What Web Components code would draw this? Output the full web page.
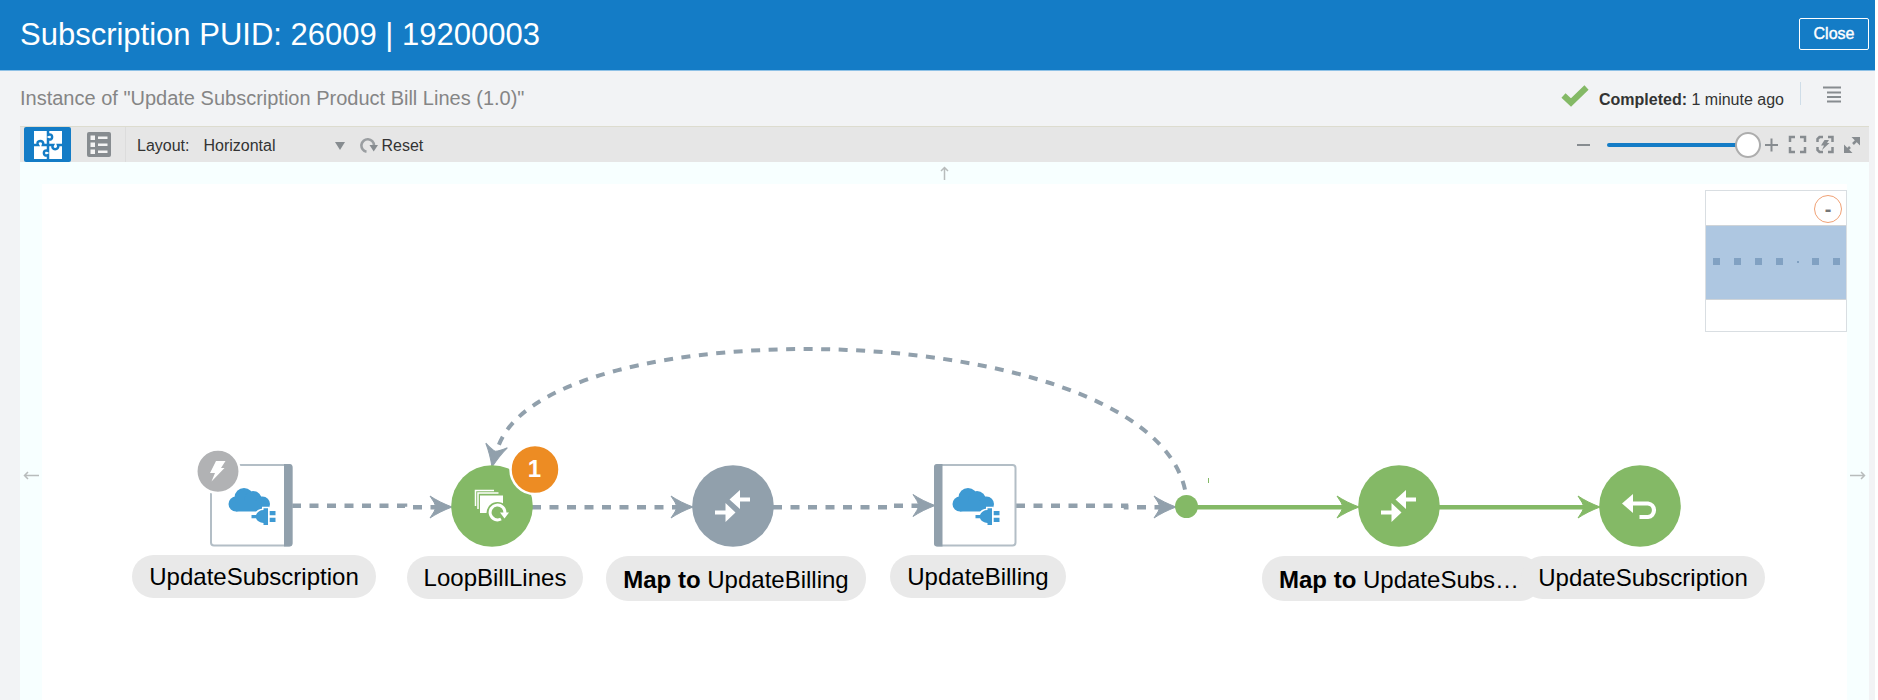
<!DOCTYPE html>
<html lang="en">
<head>
<meta charset="utf-8">
<title>Subscription instance</title>
<style>
html,body{margin:0;background:#fff;font-family:"Liberation Sans",Arial,sans-serif;font-size:16px;color:#333}
</style>
</head>
<body>
<instance-page>
  <page-header slot="header">Subscription PUID: 26009 | 19200003</page-header>
  <instance-bar slot="bar"><span>Instance of "Update Subscription Product Bill Lines (1.0)"</span><b slot="state">Completed:</b><span slot="when">1 minute ago</span></instance-bar>
  <canvas-toolbar slot="tools"></canvas-toolbar>
  <flow-canvas>
    <flow-edges></flow-edges>
    <flow-node kind="trigger" style="left:84px;top:302px">UpdateSubscription</flow-node>
    <flow-node kind="loop" style="left:325px;top:303px" badge="1">LoopBillLines</flow-node>
    <flow-node kind="map-idle" style="left:566px;top:303px"><b>Map to</b> UpdateBilling</flow-node>
    <flow-node kind="invoke" style="left:808px;top:302px">UpdateBilling</flow-node>
    <flow-node kind="map" clipped style="left:1232px;top:303px"><b>Map to</b> UpdateSubs…</flow-node>
    <flow-node kind="return" style="left:1473px;top:303px">UpdateSubscription</flow-node>
    <mini-map slot="overview"></mini-map>
  </flow-canvas>
</instance-page>

<script>
const define = (name, html, setup) => customElements.define(name, class extends HTMLElement {
  connectedCallback() {
    if (this.shadowRoot) return;
    const t = document.createElement('template');
    t.innerHTML = html;
    this.attachShadow({mode: 'open'}).appendChild(t.content.cloneNode(true));
    if (setup) setup(this, this.shadowRoot);
  }
});

define('instance-page', `
<style>
:host{display:flex;flex-direction:column;min-height:100vh;margin-right:3px;background:#f2f3f5}
main{flex:1;display:flex;flex-direction:column;padding:0 6px 0 20px}
</style>
<slot name="header"></slot>
<slot name="bar"></slot>
<main><slot name="tools"></slot><slot></slot></main>`);

define('page-header', `
<style>
:host{display:flex;align-items:center;justify-content:space-between;height:70px;padding:0 6px 0 20px;background:#147cc6;border-bottom:1px solid #8fc1e6;color:#fff}
h1{margin:0;font-size:31px;line-height:36px;font-weight:400}
button{height:32px;width:70px;margin:0 0 3px;padding:0;background:none;border:1px solid #fff;border-radius:2px;color:#fff;font:16px "Liberation Sans",Arial,sans-serif;-webkit-text-stroke:.4px #fff}
</style>
<h1><slot></slot></h1><button type="button">Close</button>`);

define('instance-bar', `
<style>
:host{display:flex;align-items:center;justify-content:space-between;height:55px;padding:0 32px 0 20px}
h2{margin:0 0 2px;font-size:20px;line-height:24px;font-weight:400;color:#858585}
.s{display:flex;align-items:center}
.t{margin:3px 16px 0 10px;line-height:20px;white-space:pre}
i{width:1px;height:23px;margin:0 22px 10px 0;background:#cfdde8}
button{display:flex;padding:0;margin-bottom:8px;border:0;background:none}
.ok{margin-bottom:5px}
</style>
<h2><slot></slot></h2>
<div class="s">
<svg class="ok" width="28" height="22"><path d="M2.500 10.500 L10 17.500 L25.500 2.500" fill="none" stroke="#84b966" stroke-width="6"/></svg>
<div class="t"><slot name="state"></slot> <slot name="when"></slot></div><i></i>
<button type="button" aria-label="Menu"><svg width="20" height="17"><path d="M0 1.500H18M4 6.500H18M4 11H18M4 15.500H18" stroke="#878c90" stroke-width="2"/></svg></button>
</div>`);

define('canvas-toolbar', `
<style>
:host{display:flex;align-items:center;height:35px;border-top:1px solid #dddccf;background:#e6e6e6}
button{display:flex;align-items:center;justify-content:center;padding:0;border:0;background:none;color:inherit;font:inherit}
.view{width:47px;height:35px;margin-left:4px;border-radius:2px}
.on{background:#147cc6}
.sep{width:1px;height:35px;margin:0 11px 0 3px;background:#dcdcdc}
label,.pick,.reset{margin-top:2px}
.pick{display:grid;align-items:center;width:143px;margin-left:14px;margin-right:14px}
.pick>*{grid-area:1/1}
select{appearance:none;width:100%;padding:0;border:0;background:none;color:inherit;font:inherit;line-height:20px}
.pick svg{justify-self:end;margin-right:1px;pointer-events:none}
.reset{gap:3px}
.zoom{display:flex;align-items:center;margin-left:auto;padding-right:8px}
input{appearance:none;width:154px;height:28px;margin:0 4px 0 16px;background:none}
input::-webkit-slider-runnable-track{height:4px;border-radius:2px;background:#147cc6}
input::-webkit-slider-thumb{appearance:none;width:26px;height:26px;margin-top:-11px;border:2px solid #adadad;border-radius:50%;background:#fff}
.z{margin-left:9px}
</style>
<button class="view on" type="button" aria-label="Canvas view"><svg width="28" height="28" viewBox="0 0 28 28"><path d="M0 0H28V28H0Z" fill="#fff"/><path d="M14 0V4C19.500 1 19.500 11 14 8V14M0 14H4C1 8.500 11 8.500 9 14H19C16 19.500 26 19.500 24 14H28M14 14V20C8.500 17 8.500 27 14 24V28" fill="none" stroke="#147cc6" stroke-width="2.500"/></svg></button>
<button class="view" type="button" aria-label="List view"><svg width="24" height="25"><rect width="24" height="25" rx="2" fill="#878c90"/><path d="M3.500 3.500h4.500v4.500h-4.500zM3.500 10.500h4.500v4.500h-4.500zM3.500 17.500h4.500v4.500h-4.500zM11 4.500h9.500v2.500h-9.500zM11 11.500h9.500v2.500h-9.500zM11 18.500h9.500v2.500h-9.500z" fill="#f4f4f4"/></svg></button>
<span class="sep"></span>
<label for="lay">Layout:</label>
<span class="pick"><select id="lay"><option>Horizontal</option><option>Vertical</option></select><svg width="10" height="8"><path d="M0 0H10L5 8Z" fill="#878c90"/></svg></span>
<button class="reset" type="button"><svg width="18" height="17" viewBox="0 0 18 17"><path d="M6.500 14.700A6.300 6.300 0 1 1 14 8.500" fill="none" stroke="#9a9ea1" stroke-width="2.600"/><path d="M9.500 8H18L13.700 14.500Z" fill="#878c90"/></svg>Reset</button>
<div class="zoom">
<button type="button" aria-label="Zoom out"><svg width="14" height="14"><path d="M0 7H13" stroke="#878c90" stroke-width="2"/></svg></button>
<input type="range" min="0" max="100" value="100" aria-label="Zoom">
<button type="button" aria-label="Zoom in"><svg width="14" height="14"><path d="M0 7H13M6.500 0.500V13.500" stroke="#878c90" stroke-width="2"/></svg></button>
<button class="z" type="button" aria-label="Fit"><svg width="19" height="19"><path d="M2 7V2H7M12 2H17V7M17 12V17H12M7 17H2V12" fill="none" stroke="#878c90" stroke-width="2.500"/></svg></button>
<button class="z" type="button" aria-label="Fit activity"><svg width="18" height="19"><path d="M1.500 7V4L3.500 2H7M12 2H16.500V7M16.500 12V17H12M7 17H3.500L1.500 15V12" fill="none" stroke="#878c90" stroke-width="2.500"/><path d="M8.500 5H13L11 8H13.500L6 15L8 10.500H5Z" fill="#878c90"/></svg></button>
<button class="z" type="button" aria-label="Full screen"><svg width="18" height="18"><path d="M10 8L14 4M3 15L7 11" stroke="#878c90" stroke-width="2.500"/><path d="M8.500 1H17V9.500ZM1 8.500V17H9.500Z" fill="#878c90"/></svg></button>
</div>`);

define('flow-canvas', `
<style>
:host{display:grid;grid-template:22px 1fr / 22px 1fr 22px;flex:1;position:relative;overflow:hidden;background:#f7ffff}
.top{grid-area:1/1/2/4;place-self:center}
.side{place-self:center;margin-top:66px}
.left{grid-area:2/1}
.right{grid-area:2/3}
.area{grid-area:2/2;background:#fff}
.map{position:absolute;top:28px;right:22px}
</style>
<div class="area"></div>
<svg class="top" width="9" height="14"><path d="M4.500 14V2M1 5L4.500 1.500L8 5" fill="none" stroke="#b8bcbc" stroke-width="1.500"/></svg>
<svg class="side left" width="16" height="9"><path d="M16 4.500H2M5 1L1.500 4.500L5 8" fill="none" stroke="#b8bcbc" stroke-width="1.500"/></svg>
<svg class="side right" width="16" height="9"><path d="M0 4.500H14M11 1L14.500 4.500L11 8" fill="none" stroke="#b8bcbc" stroke-width="1.500"/></svg>
<slot></slot>
<div class="map"><slot name="overview"></slot></div>`);

define('flow-edges', `
<style>:host{position:absolute;left:0;top:0}svg{display:block}</style>
<svg width="1848" height="440" viewBox="20 162 1848 440">
<defs>
<path id="h" d="M0 0C-8-3-16-7-22-11Q-17-4-16 0Q-17 4-22 11C-16 7-8 3 0 0Z"/>
</defs>
<g fill="none" stroke="#91a0ac" stroke-width="4.500" stroke-dasharray="9 8.500">
<path d="M292 505.700H405V507.200H438"/>
<path d="M532 507.200H680"/>
<path d="M773 507.200H888V505.700H922"/>
<path d="M1016 505.700H1126V507.200H1162"/>
<path d="M1187 507C1185 312 525 301 496 455" stroke-width="4"/>
</g>
<g fill="#91a0ac" stroke="#91a0ac">
<use href="#h" x="452" y="507"/><use href="#h" x="693" y="507"/><use href="#h" x="935" y="505.500"/><use href="#h" x="1176" y="507"/>
<use href="#h" transform="translate(492 467) rotate(102)"/>
</g>
<path d="M1187 507.200H1345M1439 507.200H1586" stroke="#84b966" stroke-width="4.500"/>
<g fill="#84b966">
<use href="#h" x="1359" y="507" stroke="#84b966"/><use href="#h" x="1600" y="507" stroke="#84b966"/>
<circle cx="1186.500" cy="506.500" r="11.500"/>
<path d="M1208 478h1v5h-1z"/>
</g>
</svg>`);

const cloud = `<g fill="#3e9ad3"><circle cx="26" cy="40" r="7.500"/><circle cx="34" cy="33.500" r="9.500"/><circle cx="43" cy="36" r="9"/><circle cx="52.500" cy="40" r="7.500"/><path d="M26 37H53V47.500H26Z"/></g>
<g stroke="#fff" stroke-width="3" fill="#fff"><path d="M41.500 51H46C47 48 50 46 53.500 46V44.300H58V61H53.500V59C50 59 47 57 46 54.300H41.500Z"/></g>
<path fill="#3e9ad3" d="M41.500 51H46C47 48 50 46 53.500 46V44.300H58V61H53.500V59C50 59 47 57 46 54.300H41.500ZM59.700 47H65.500V51.300H59.700ZM59.700 53.700H65.500V58H59.700Z"/>`;
const box = bar => `<rect x="1" y="1" width="80.500" height="80.500" rx="3" fill="#fff" stroke="#b3bec6" stroke-width="2"/>${bar}${cloud}`;
const disc = c => `<circle cx="41" cy="41" r="40.800" fill="${c}"/>`;
const mapIcon = `<path fill="#fff" d="M37.500 34.500L48 25V32.500H58V36.500H48V44ZM43.500 47.500L33.500 38V45.500H23V49.500H33.500V57Z"/>`;
const shapes = {
  trigger: box('<path d="M74 0H79.500A3 3 0 0 1 82.500 3V79.500A3 3 0 0 1 79.500 82.500H74Z" fill="#91a0ac"/>') +
    '<circle cx="8" cy="7.300" r="21.700" fill="#b1b2b4" stroke="#fff" stroke-width="2.500"/><path fill="#fff" d="M6-3H15.500L11 4H14.500L1.500 17.500L5 9H0Z"/>',
  invoke: box('<path d="M3 0H8.500V82.500H3A3 3 0 0 1 0 79.500V3A3 3 0 0 1 3 0Z" fill="#91a0ac"/>'),
  loop: disc('#84b966') +
    '<path d="M24.500 41V25.500H43M27 44V28H47.500" fill="none" stroke="#fff" stroke-width="1.500"/><path d="M29 30.500H52V48H29Z" fill="#fff"/><circle cx="46.500" cy="48" r="11" fill="#84b966"/><path d="M50 54A7.400 7.400 0 1 1 53.900 48" fill="none" stroke="#fff" stroke-width="3"/><path d="M49 47.500H58L53.500 53.500Z" fill="#fff"/><circle cx="84" cy="4.500" r="24.500" fill="#ed8c23" stroke="#fff" stroke-width="2.500"/>',
  'map-idle': disc('#91a0ac') + mapIcon,
  map: disc('#84b966') + mapIcon,
  return: disc('#84b966') + '<path d="M23 38.500L34 29V48Z" fill="#fff"/><path d="M33 38.500H49A6.800 6.800 0 0 1 49 52H40.500" fill="none" stroke="#fff" stroke-width="4.200"/>'
};

define('flow-node', `
<style>
:host{position:absolute;display:flex;flex-direction:column;align-items:center;width:300px;color:#000}
.shape{position:relative;width:82px;height:82px;margin:0 7px 9px 0}
svg{display:block;overflow:visible}
.badge{position:absolute;left:61px;top:-19px;width:46px;line-height:46px;text-align:center;font-size:24px;font-weight:700;color:#fff}
.label{box-sizing:border-box;padding:0 17px;border-radius:22px;background:#e9e9e9;font-size:24px;line-height:43px;white-space:nowrap}
:host([kind^="map"]) .label{padding-top:2px}
:host([clipped]) .label{width:280px}
</style>
<div class="shape"><svg width="82" height="82"></svg></div>
<div class="label"><slot></slot></div>`, (el, root) => {
  root.querySelector('svg').innerHTML = shapes[el.getAttribute('kind')];
  if (el.hasAttribute('badge')) {
    const b = document.createElement('span');
    b.className = 'badge';
    b.textContent = el.getAttribute('badge');
    root.querySelector('.shape').append(b);
  }
});

define('mini-map', `
<style>
:host{display:block;position:relative;box-sizing:border-box;width:142px;height:142px;border:1px solid #d9dee2;background:#fff}
svg{display:block}
button{position:absolute;top:4px;right:4px;width:28px;height:28px;padding:0;border:1px solid #f0a175;border-radius:50%;background:#fff;color:#777;font:700 20px/24px "Liberation Sans",Arial,sans-serif}
</style>
<svg width="140" height="140"><path d="M0 34H140V108H0Z" fill="#aec7e1"/><path d="M0 34.500H140M0 108.500H140" stroke="#cfd4d8"/><path fill="#81a1c2" d="M7 67h7v7h-7zM28 67h7v7h-7zM49 67h7v7h-7zM70 67h7v7h-7zM91 70h2v2h-2zM106 67h7v7h-7zM127 67h7v7h-7z"/></svg>
<button type="button" aria-label="Collapse overview">-</button>`);
</script>
</body>
</html>
